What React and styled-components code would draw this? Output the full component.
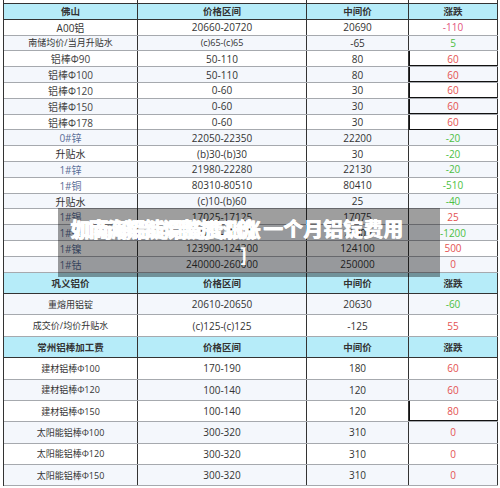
import React from "react";
import styled, { createGlobalStyle } from "styled-components";

const Global = createGlobalStyle`
  html, body { margin: 0; padding: 0; background: #ffffff; }
  body { width: 500px; height: 488px; overflow: hidden; font-family: "Open Sans", "Noto Sans CJK SC", sans-serif; }
`;

const Page = styled.div`
  position: relative;
  width: 500px;
  height: 488px;
  overflow: hidden;
`;

const Table = styled.div`
  margin-left: 3px;
  width: 494px;
  display: flex;
  flex-direction: column;
  border-left: 1px solid #333;
`;

const Row = styled.div`
  display: grid;
  grid-template-columns: 134px 169px 102px 89px;
  height: ${(p) => p.$h}px;
  background: ${(p) => (p.$head ? "#b6ecf9" : p.$alt ? "#f4f7fc" : "#ffffff")};
  border-bottom: 1px solid ${(p) => (p.$head || p.$dark ? "#333" : "#a6a9ae")};
  box-sizing: border-box;
`;

const Cell = styled.div`
  display: flex;
  align-items: center;
  justify-content: center;
  border-right: 1px solid #333;
  box-sizing: border-box;
  font-size: ${(p) => (p.$head ? "9.5px" : p.$small ? "9px" : "10px")};
  font-weight: ${(p) => (p.$head ? 700 : 400)};
  color: ${(p) => p.$color || "#333"};
  white-space: nowrap;
  box-shadow: ${(p) => (p.$box ? "inset 1px 0 0 #111, inset 0 -1px 0 #111" : "none")};
`;

const Overlay = styled.div`
  position: absolute;
  left: 58px;
  top: 208px;
  width: 382px;
  height: 69px;
  background: rgba(0, 0, 0, 0.38);
  box-sizing: border-box;
  padding: 9px 0 0 12px;
`;

const TitleLine = styled.div`
  display: flex;
  align-items: center;
  color: #ffffff;
  font-family: "Noto Sans CJK SC", sans-serif;
  font-weight: 900;
  font-size: 20px;
  line-height: 24px;
  white-space: nowrap;
  text-shadow: 0.4px 0 0 #fff;
`;

const Smudge = styled.span`
  position: relative;
  display: inline-block;
  width: 193px;
  letter-spacing: -1.5px;
`;

const Ghost = styled.span`
  position: absolute;
  left: 4px;
  top: 1px;
  letter-spacing: -1.5px;
`;

const Bracket = styled.div`
  color: #ffffff;
  font-family: "Noto Sans CJK SC", sans-serif;
  font-weight: 900;
  font-size: 18px;
  line-height: 22px;
  padding-left: 170px;
  margin-top: 2px;
`;

const RED = "#e45252";
const PINK = "#e2557c";
const GREEN = "#4cbf42";
const BLUE = "#5a6d96";

const top = [
  ["A00铝", "20660-20720", "20690", "-110", PINK, false, false, "#333"],
  ["南储均价/当月升贴水", "(c)65-(c)65", "-65", "5", GREEN, false, true, "#333"],
  ["铝棒Φ90", "50-110", "80", "60", RED, true, false, "#444"],
  ["铝棒Φ100", "50-110", "80", "60", RED, true, false, "#444"],
  ["铝棒Φ120", "0-60", "30", "60", RED, true, false, "#444"],
  ["铝棒Φ150", "0-60", "30", "60", RED, true, false, "#444"],
  ["铝棒Φ178", "0-60", "30", "60", RED, true, false, "#444"],
  ["0#锌", "22050-22350", "22200", "-20", GREEN, false, false, BLUE],
  ["升贴水", "(b)30-(b)30", "30", "-20", GREEN, false, false, "#333"],
  ["1#锌", "21980-22280", "22130", "-20", GREEN, false, false, BLUE],
  ["1#铜", "80310-80510", "80410", "-510", GREEN, false, false, BLUE],
  ["升贴水", "(c)10-(b)60", "25", "-40", GREEN, false, false, "#333"],
  ["1#锡", "17025-17125", "17075", "25", RED, false, false, BLUE],
  ["1#锑", "72700-73300", "73000", "-1200", GREEN, false, false, BLUE],
  ["1#镍", "123900-124300", "124100", "500", RED, false, false, BLUE],
  ["1#钴", "240000-260000", "250000", "0", RED, false, false, BLUE],
];

const gongyi = [
  ["重熔用铝锭", "20610-20650", "20630", "-60", GREEN, false],
  ["成交价/均价升贴水", "(c)125-(c)125", "-125", "55", RED, false],
];

const changzhou = [
  ["建材铝棒Φ100", "170-190", "180", "60", RED, false],
  ["建材铝棒Φ120", "100-140", "120", "60", RED, false],
  ["建材铝棒Φ150", "100-140", "120", "80", RED, true],
  ["太阳能铝棒Φ100", "300-320", "310", "0", RED, false],
  ["太阳能铝棒Φ120", "300-320", "310", "0", RED, false],
  ["太阳能铝棒Φ150", "300-320", "310", "0", RED, false],
];

function Header({ title, h }) {
  return (
    <Row $head $h={h}>
      <Cell $head>{title}</Cell>
      <Cell $head>价格区间</Cell>
      <Cell $head>中间价</Cell>
      <Cell $head>涨跌</Cell>
    </Row>
  );
}

export default function App() {
  return (
    <Page>
      <Global />
      <Table>
        <Row $h={4} $dark>
          <Cell />
          <Cell />
          <Cell />
          <Cell />
        </Row>
        <Header title="佛山" h={15.8} />
        {top.map((r, i) => (
          <Row key={i} $h={15.8} $alt={i % 2 === 1}>
            <Cell $small={r[6]} $color={r[7]}>{r[0]}</Cell>
            <Cell $small={r[6]}>{r[1]}</Cell>
            <Cell>{r[2]}</Cell>
            <Cell $color={r[4]} $box={r[5]}>{r[3]}</Cell>
          </Row>
        ))}
        <Header title="巩义铝价" h={21.4} />
        {gongyi.map((r, i) => (
          <Row key={i} $h={21.4} $alt={i % 2 === 0}>
            <Cell $small>{r[0]}</Cell>
            <Cell>{r[1]}</Cell>
            <Cell>{r[2]}</Cell>
            <Cell $color={r[4]}>{r[3]}</Cell>
          </Row>
        ))}
        <Header title="常州铝棒加工费" h={21.4} />
        {changzhou.map((r, i) => (
          <Row key={i} $h={21.4} $alt={i % 2 === 1}>
            <Cell $small>{r[0]}</Cell>
            <Cell>{r[1]}</Cell>
            <Cell>{r[2]}</Cell>
            <Cell $color={r[4]} $box={r[5]}>{r[3]}</Cell>
          </Row>
        ))}
      </Table>
      <Overlay>
        <TitleLine>
          <Smudge>
            如南海铝锭调整加工价
            <Ghost>加南瀚铝锭铝锭费涨涨</Ghost>
          </Smudge>
          一个月铝锭费用
        </TitleLine>
        <Bracket>]</Bracket>
      </Overlay>
    </Page>
  );
}
